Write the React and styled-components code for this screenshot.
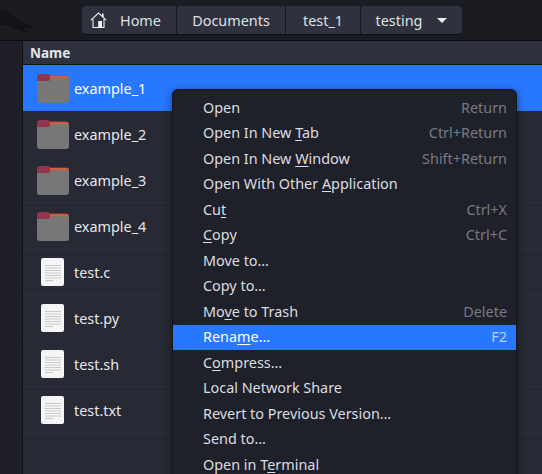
import React from 'react';
import styled, { createGlobalStyle } from 'styled-components';

const Global = createGlobalStyle`
	html, body {
		margin: 0;
		padding: 0;
		background: #1b1c22;
		overflow: hidden;
	}
	* { box-sizing: border-box; }
`;

const Window = styled.div`
	position: relative;
	width: 542px;
	height: 474px;
	overflow: hidden;
	display: flex;
	flex-direction: column;
	background: #1b1c22;
	color: #e8e8ea;
	font-family: 'Noto Sans', 'Open Sans', sans-serif;
	font-size: 14.4px;
`;

const TopBar = styled.div`
	height: 41px;
	flex: none;
	display: flex;
	align-items: flex-start;
	padding: 6px 0 0 82px;
	background: #1b1c21;
	border-bottom: 1px solid #0d0e11;
	svg.fish {
		position: absolute;
		left: 0;
		top: 9px;
	}
`;

const PathBar = styled.div`
	display: flex;
	height: 28px;
	border-radius: 4px;
	background: #2f323e;
	box-shadow: 0 1px 0 #0e0f13;
	overflow: hidden;
`;

const Crumb = styled.div`
	width: ${p => p.$w}px;
	display: flex;
	align-items: center;
	justify-content: ${p => (p.$start ? 'flex-start' : 'center')};
	padding-left: ${p => p.$pad || 0}px;
	gap: ${p => p.$gap || 0}px;
	border-right: ${p => (p.$last ? 'none' : '1px solid #17181d')};
	color: #dfe0e4;
`;

const Caret = styled.span`
	width: 0;
	height: 0;
	border-left: 5px solid transparent;
	border-right: 5px solid transparent;
	border-top: 5px solid #eceded;
`;

const Body = styled.div`
	flex: 1;
	display: flex;
	min-height: 0;
`;

const Sidebar = styled.div`
	width: 23px;
	flex: none;
	background: #1e1f27;
	border-right: 1px solid #101116;
`;

const Files = styled.div`
	flex: 1;
	background: #272934;
	display: flex;
	flex-direction: column;
`;

const ColumnHead = styled.div`
	height: 24px;
	flex: none;
	display: flex;
	align-items: center;
	padding-left: 7px;
	background: #2f323e;
	border-bottom: 1px solid #0f1014;
	font-weight: 700;
	font-size: 13.5px;
	color: #e4e5e8;
`;

const FileRow = styled.div`
	height: 46px;
	flex: none;
	display: flex;
	align-items: center;
	padding-left: ${p => (p.$doc ? 18 : 14)}px;
	gap: ${p => (p.$doc ? 10 : 5)}px;
	background: ${p => (p.$selected ? '#2777ff' : 'transparent')};
	border-bottom: 1px solid ${p => (p.$selected ? '#2777ff' : '#2d2f3b')};
	color: ${p => (p.$selected ? '#ffffff' : '#e6e7ea')};
	svg {
		margin-top: 1px;
	}
`;

const RowLabel = styled.span`
	position: relative;
	top: 1px;
`;

const Menu = styled.div`
	position: absolute;
	left: 172px;
	top: 89px;
	width: 345px;
	padding: 5px 0 4px;
	background: #1f212a;
	border: 1px solid #14151a;
	border-radius: 6px;
	box-shadow: 0 2px 8px rgba(0, 0, 0, 0.45);
`;

const Item = styled.div`
	height: 25.5px;
	display: flex;
	align-items: center;
	justify-content: space-between;
	padding: 0 9px 1.5px 30px;
	white-space: nowrap;
	background: ${p => (p.$active ? '#2777ff' : 'transparent')};
	color: ${p => (p.$active ? '#ffffff' : '#dcdde0')};
	u {
		text-underline-offset: 2px;
	}
`;

const Shortcut = styled.span`
	color: ${p => (p.$active ? '#b9d2ff' : '#787a82')};
`;

const Fish = () => (
	<svg className="fish" width="36" height="25" viewBox="0 0 36 25">
		<path d="M0 0 L8 2 L18 11 L35 18 L30 20 L24 19 L29 24 L20 22 L10 17 L0 16Z" fill="#131418" />
	</svg>
);

const HomeIcon = () => (
	<svg width="17" height="16" viewBox="0 0 17 16" fill="none">
		<path d="M0.8 8.2 L8.5 1 L16.2 8.2" stroke="#f1f1f1" strokeWidth="1.1" />
		<path d="M3 7 V15.5 H14 V7" stroke="#f1f1f1" strokeWidth="1.1" />
		<rect x="8.2" y="9" width="3.8" height="6.5" fill="#f1f1f1" />
		<rect x="12" y="1.5" width="1.6" height="3.5" fill="#f1f1f1" />
	</svg>
);

const FolderIcon = () => (
	<svg width="32" height="29" viewBox="0 0 32 29">
		<path d="M0 12 V3 a3 3 0 0 1 3 -3 H11 L14 1.8 H29 a3 3 0 0 1 3 3 V12Z" fill="#94344f" />
		<path d="M13 1.8 H29 a3 3 0 0 1 3 3 V6 H13Z" fill="#c9603f" />
		<path d="M0 7 H10 Q12 7 13.5 5.8 L15 4.2 H32 V26 a3 3 0 0 1 -3 3 H3 a3 3 0 0 1 -3 -3Z" fill="#777777" />
	</svg>
);

const DocIcon = () => (
	<svg width="23" height="28" viewBox="0 0 23 28">
		<rect width="23" height="28" rx="2" fill="#f5f5f5" />
		<g fill="#c9c9c9">
			{[7, 9.5, 12, 14.5, 17, 19.5].map(y => <rect key={y} x="4" y={y} width="16" height="1" />)}
			<rect x="4" y="22" width="8" height="1" />
		</g>
	</svg>
);

const files = [
	{ name: 'example_1', selected: true },
	{ name: 'example_2' },
	{ name: 'example_3' },
	{ name: 'example_4' },
	{ name: 'test.c', doc: true },
	{ name: 'test.py', doc: true },
	{ name: 'test.sh', doc: true },
	{ name: 'test.txt', doc: true },
	{ name: '', empty: true },
];

const App = () => (
	<Window>
		<Global />
		<TopBar>
			<Fish />
			<PathBar>
				<Crumb $w={95} $start $pad={8} $gap={13}><HomeIcon />Home</Crumb>
				<Crumb $w={109}>Documents</Crumb>
				<Crumb $w={75}>test_1</Crumb>
				<Crumb $w={101} $last $gap={15}>testing <Caret /></Crumb>
			</PathBar>
		</TopBar>
		<Body>
			<Sidebar />
			<Files>
				<ColumnHead>Name</ColumnHead>
				{files.map((f, i) => (
					<FileRow key={i} $selected={f.selected} $doc={f.doc}>
						{!f.empty && (f.doc ? <DocIcon /> : <FolderIcon />)}
						<RowLabel>{f.name}</RowLabel>
					</FileRow>
				))}
			</Files>
		</Body>
		<Menu>
			<Item>Open<Shortcut>Return</Shortcut></Item>
			<Item><span>Open In New <u>T</u>ab</span><Shortcut>Ctrl+Return</Shortcut></Item>
			<Item><span>Open In New <u>W</u>indow</span><Shortcut>Shift+Return</Shortcut></Item>
			<Item><span>Open With Other <u>A</u>pplication</span></Item>
			<Item><span>Cu<u>t</u></span><Shortcut>Ctrl+X</Shortcut></Item>
			<Item><span><u>C</u>opy</span><Shortcut>Ctrl+C</Shortcut></Item>
			<Item>Move to…</Item>
			<Item>Copy to…</Item>
			<Item><span>Mo<u>v</u>e to Trash</span><Shortcut>Delete</Shortcut></Item>
			<Item $active><span>Rena<u>m</u>e…</span><Shortcut $active>F2</Shortcut></Item>
			<Item><span>C<u>o</u>mpress…</span></Item>
			<Item>Local Network Share</Item>
			<Item>Revert to Previous Version…</Item>
			<Item>Send to…</Item>
			<Item><span>Open in T<u>e</u>rminal</span></Item>
		</Menu>
	</Window>
);

export default App;
